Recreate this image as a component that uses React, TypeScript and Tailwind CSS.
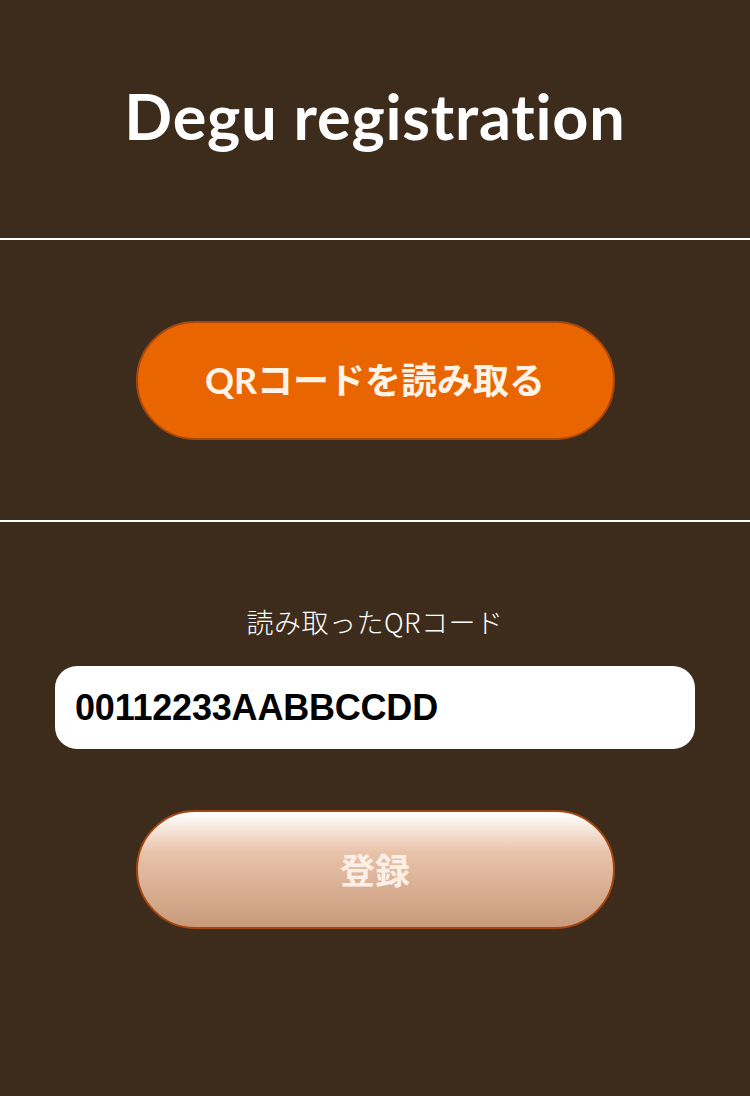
export default function App() {
  return (
    <div className="min-h-[1096px] w-full bg-[#3d2c1c] font-['Noto_Sans','Noto_Sans_CJK_JP',sans-serif] text-white">
      <header className="flex h-[238px] items-center justify-center pb-[8px]">
        <h1 className="font-['Lato','Noto_Sans_CJK_JP',sans-serif] text-[63px] font-bold leading-none tracking-[0.8px]">
          Degu registration
        </h1>
      </header>
      <div className="h-[2px] bg-white" />

      <section className="flex h-[280px] items-center justify-center">
        <button className="flex h-[119px] w-[479px] items-center justify-center rounded-full border-2 border-[#a9470a] bg-[#e86500] font-['Lato','Noto_Sans_CJK_JP',sans-serif] text-[36px] font-bold text-[#fff3e8]">
          QRコードを読み取る
        </button>
      </section>
      <div className="h-[2px] bg-white" />

      <section className="flex flex-col items-center pt-[82px]">
        <p className="font-['Noto_Sans_CJK_JP',sans-serif] text-[27px] font-light leading-[36px] tracking-[0.5px]">
          読み取ったQRコード
        </p>
        <div className="mt-[26px] flex h-[83px] w-[640px] items-center rounded-[22px] bg-white px-[20px]">
          <span className="font-['Liberation_Sans',sans-serif] text-[36px] font-bold tracking-[-0.2px] text-black">
            00112233AABBCCDD
          </span>
        </div>
        <button className="mt-[61px] flex h-[119px] w-[479px] items-center justify-center rounded-full border-2 border-[#a4470f] bg-gradient-to-b from-[#ffffff] via-[#e8c3aa] via-[35%] to-[#c99a7b] font-['Noto_Sans_CJK_JP',sans-serif] text-[35px] font-bold text-[#fcefe6]">
          登録
        </button>
      </section>
    </div>
  );
}
